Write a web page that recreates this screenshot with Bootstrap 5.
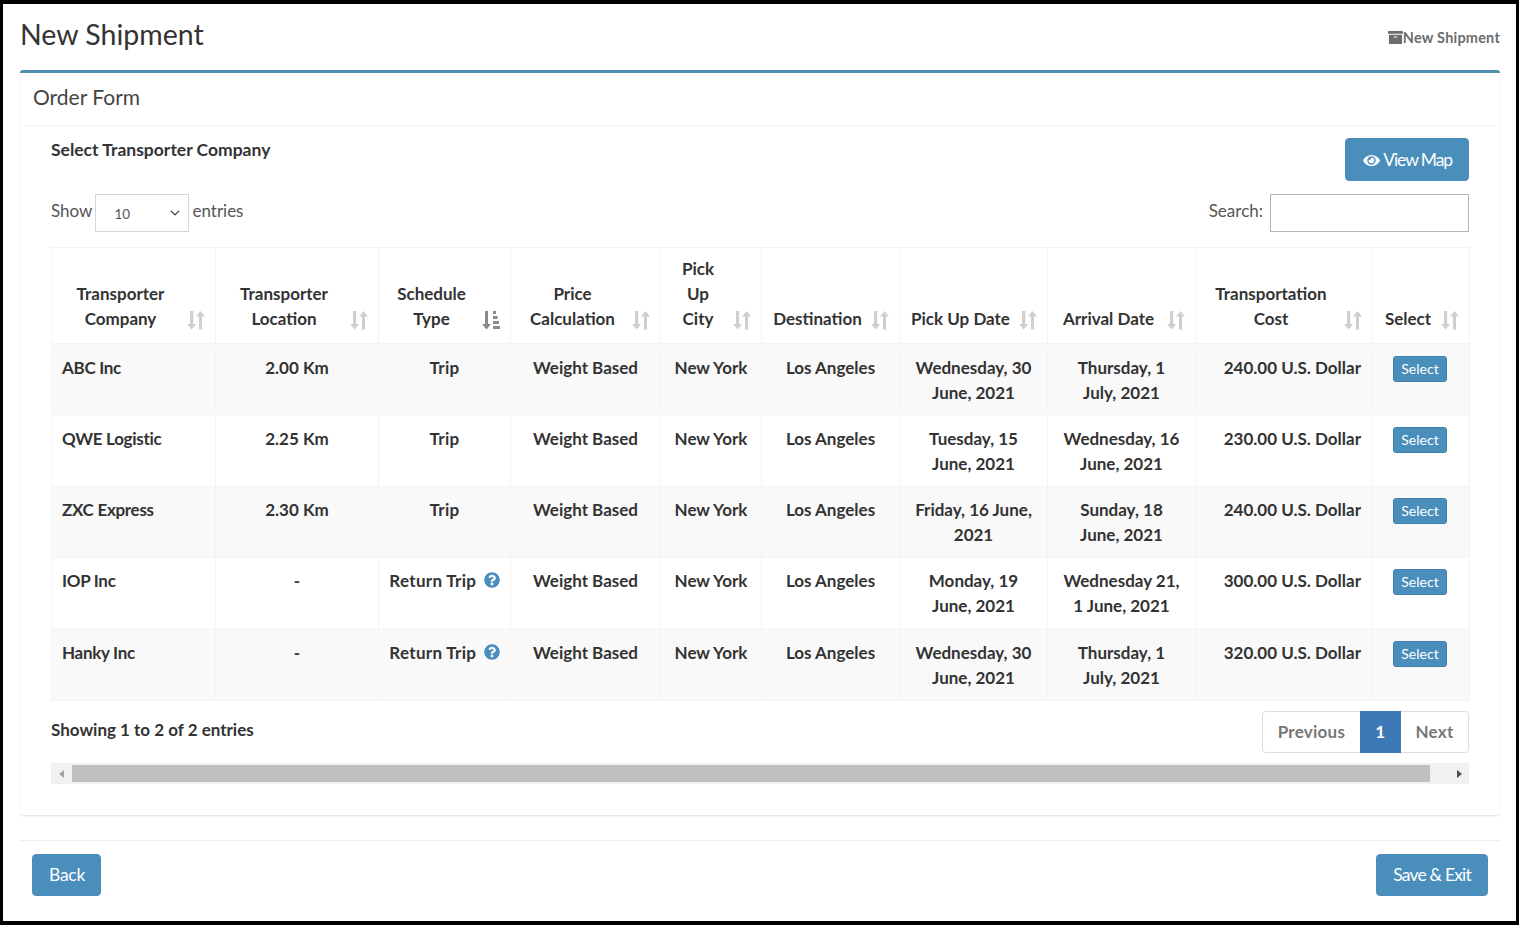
<!DOCTYPE html>
<html lang="en">
<head>
<meta charset="utf-8">
<title>New Shipment</title>
<link href="https://cdn.jsdelivr.net/npm/bootstrap@5.3.0/dist/css/bootstrap.min.css" rel="stylesheet">
<style>
html,body{height:100%}
body{font-family:"Lato","Liberation Sans",sans-serif;font-size:17px;line-height:25px;color:#333;background:#fff;border:solid #000;border-width:4px 3px;overflow:hidden}
.page-wrap{padding:0 16px 0 17px}
.title-bar{height:66px;padding-top:10px}
.title-bar h1{font-size:28.500px;line-height:40px;margin:0;font-weight:400;color:#333}
.crumb{font-size:14.500px;font-weight:700;color:#6c6c6c;margin-top:12px;line-height:24px;letter-spacing:.2px}
.crumb svg{width:15px;height:15px;vertical-align:-2px;fill:#6c6c6c}
.order-card{--bs-card-border-radius:3px;--bs-card-inner-border-radius:0;border:0;border-top:3px solid #4f8fb3;box-shadow:0 1px 2px rgba(0,0,0,.12);height:745px}
.order-card .card-header{background:#fff;border-bottom:1px solid #f4f4f4;height:53px;padding:10px 13px;font-size:21px;line-height:27px;color:#444}
.order-card .card-body{padding:12px 31px 0}
.sub-title{font-weight:700;font-size:17.500px;line-height:24px}
.btn-ship{--bs-btn-bg:#4a8ebc;--bs-btn-border-color:#4a8ebc;--bs-btn-color:#fff;--bs-btn-hover-bg:#3f7fab;--bs-btn-hover-color:#fff;--bs-btn-border-radius:4px;font-size:17.500px;line-height:25px;padding:8px 16px;letter-spacing:-.8px}
.btn-ship svg{width:19px;height:15px;fill:#fff;vertical-align:-2px;margin-right:2px}
.btn-map{letter-spacing:-1.100px}
.btn-foot{line-height:24px}
.btn-back{letter-spacing:-.25px;padding-right:15px}
.filters{margin-top:13px;height:38px;color:#555;line-height:34px}
.entries-pick{width:94px;height:38px;border-radius:0;border:1px solid #d2d6de;font-size:13.500px;padding:2px 12px 0 18px;margin:0 3px;color:#555;background-position:right 6px center;background-size:14px 10px}
.search-box{width:199px;height:38px;border-radius:0;border:1px solid #b5b5b5;margin-left:7px}
.ship-tbl{--bs-table-striped-bg:#f9f9f9;--bs-table-border-color:#f4f4f4;--bs-table-color:#333;--bs-table-striped-color:#333;table-layout:fixed;width:1418px;margin:15px 0 0;border-color:#f4f4f4;font-weight:700;line-height:25px}
.ship-tbl th{position:relative;vertical-align:bottom;text-align:center;padding:8px 37px 12px 11px;border-bottom:2px solid #f4f4f4;font-weight:700;white-space:normal}
.ship-tbl th:nth-child(1){width:164px}
.ship-tbl th:nth-child(2){width:163px}
.ship-tbl th:nth-child(3){width:132px}
.ship-tbl th:nth-child(4){width:150px}
.ship-tbl th:nth-child(5){width:101px}
.ship-tbl th:nth-child(6){width:138px}
.ship-tbl th:nth-child(7){width:148px}
.ship-tbl th:nth-child(8){width:148px}
.ship-tbl th:nth-child(9){width:177px}
.ship-tbl th:nth-child(10){width:97px}
.ship-tbl td{padding:10px 11px;text-align:center;height:71px;vertical-align:top}
.ship-tbl tbody tr:last-child td{padding-top:11px}
.ship-tbl td:first-child{text-align:left;padding-left:10px;letter-spacing:-.3px}
.ship-tbl td:nth-child(3){letter-spacing:.3px;padding-left:10px;padding-right:10px}
.ship-tbl td:nth-child(9){text-align:right}
.ship-tbl td:nth-child(10){padding-right:13px}
.sort-mark{position:absolute;right:10px;bottom:13px;width:18px;height:20px}
.help-mark{width:16px;height:16px;fill:#4a8ebc;margin-left:3px;vertical-align:-1px}
.pick-btn{--bs-btn-bg:#4a8ebc;--bs-btn-border-color:#3f7fab;--bs-btn-color:#fff;font-size:14px;line-height:18px;padding:3px 7px;border-radius:3px;font-weight:400;margin-top:-1px}
.foot-row{margin-top:10px;height:42px}
.foot-info{font-weight:700;line-height:38px}
.ship-pages{--bs-pagination-color:#777;--bs-pagination-active-bg:#3d78b7;--bs-pagination-active-border-color:#3d78b7;--bs-pagination-border-color:#ddd;--bs-pagination-padding-x:14.550px;--bs-pagination-padding-y:8px;--bs-pagination-font-size:17px;--bs-pagination-border-radius:4px;font-weight:700;margin:0;line-height:24px;letter-spacing:.25px}
.fake-scroll{position:relative;height:21px;margin-top:10px;background:#f1f1f1;padding:2px 39px 2px 21px}
.fake-scroll .thumb{height:100%;background:#c1c1c1}
.arrow-l,.arrow-r{position:absolute;top:6.500px;width:0;height:0;border-style:solid;border-width:4px 0 4px 5px;border-color:transparent transparent transparent #505050}
.arrow-l{left:8px;border-width:4px 5px 4px 0;border-color:transparent #a3a3a3 transparent transparent}
.arrow-r{right:7px}
.rule-line{margin:25px 0 13px;border:0;border-top:1px solid #eee;opacity:1}
.foot-btns{padding:0 12px}
</style>
</head>
<body>
<div class="page-wrap">
  <div class="title-bar d-flex justify-content-between align-items-start">
    <h1>New Shipment</h1>
    <div class="crumb"><svg viewBox="0 0 512 512"><path d="M32 448c0 17.700 14.300 32 32 32h384c17.700 0 32-14.300 32-32V160H32v288zm160-212c0-6.600 5.400-12 12-12h104c6.600 0 12 5.400 12 12v8c0 6.600-5.400 12-12 12H204c-6.600 0-12-5.400-12-12v-8zM480 32H32C14.300 32 0 46.300 0 64v48c0 8.800 7.200 16 16 16h480c8.800 0 16-7.200 16-16V64c0-17.700-14.300-32-32-32z"/></svg>New Shipment</div>
  </div>
  <div class="card order-card">
    <div class="card-header">Order Form</div>
    <div class="card-body">
      <div class="d-flex justify-content-between align-items-start">
        <div class="sub-title">Select Transporter Company</div>
        <button class="btn btn-ship btn-map" type="button"><svg viewBox="0 0 576 512"><path d="M572.520 241.400C518.290 135.590 410.930 64 288 64S57.680 135.640 3.480 241.410a32.350 32.350 0 0 0 0 29.190C57.710 376.410 165.070 448 288 448s230.320-71.640 284.520-177.410a32.350 32.350 0 0 0 0-29.190zM288 400a144 144 0 1 1 144-144 143.930 143.930 0 0 1-144 144zm0-240a95.310 95.310 0 0 0-25.310 3.790 47.850 47.850 0 0 1-66.900 66.900A95.780 95.780 0 1 0 288 160z"/></svg>View Map</button>
      </div>
      <div class="filters d-flex justify-content-between">
        <div class="d-flex"><span>Show</span><select class="form-select entries-pick"><option>10</option><option>25</option></select><span>entries</span></div>
        <div class="d-flex"><span>Search:</span><input class="form-control search-box" type="search" aria-label="Search"></div>
      </div>
      <table class="table table-bordered table-striped ship-tbl">
        <thead>
          <tr>
            <th>Transporter Company<svg class="sort-mark" viewBox="0 0 18 20"><use href="#sort-both"/></svg></th>
            <th>Transporter Location<svg class="sort-mark" viewBox="0 0 18 20"><use href="#sort-both"/></svg></th>
            <th>Schedule Type<svg class="sort-mark" viewBox="0 0 18 20"><path fill="#8a8a8a" d="M3 1h3v13h3l-4.500 5.500L0 14h3zM11 1h3v3h-3zM11 6h4.500v3H11zM11 11h6v3h-6zM11 16h7v3h-7z"/></svg></th>
            <th>Price Calculation<svg class="sort-mark" viewBox="0 0 18 20"><use href="#sort-both"/></svg></th>
            <th>Pick Up City<svg class="sort-mark" viewBox="0 0 18 20"><use href="#sort-both"/></svg></th>
            <th>Destination<svg class="sort-mark" viewBox="0 0 18 20"><use href="#sort-both"/></svg></th>
            <th>Pick Up Date<svg class="sort-mark" viewBox="0 0 18 20"><use href="#sort-both"/></svg></th>
            <th>Arrival Date<svg class="sort-mark" viewBox="0 0 18 20"><use href="#sort-both"/></svg></th>
            <th>Transportation Cost<svg class="sort-mark" viewBox="0 0 18 20"><use href="#sort-both"/></svg></th>
            <th>Select<svg class="sort-mark" viewBox="0 0 18 20"><use href="#sort-both"/></svg></th>
          </tr>
        </thead>
        <tbody>
          <tr><td>ABC Inc</td><td>2.00 Km</td><td>Trip</td><td>Weight Based</td><td>New York</td><td>Los Angeles</td><td>Wednesday, 30 June, 2021</td><td>Thursday, 1 July,&nbsp;2021</td><td>240.00 U.S. Dollar</td><td><button class="btn pick-btn" type="button">Select</button></td></tr>
          <tr><td>QWE Logistic</td><td>2.25 Km</td><td>Trip</td><td>Weight Based</td><td>New York</td><td>Los Angeles</td><td>Tuesday, 15 June, 2021</td><td>Wednesday, 16 June, 2021</td><td>230.00 U.S. Dollar</td><td><button class="btn pick-btn" type="button">Select</button></td></tr>
          <tr><td>ZXC Express</td><td>2.30 Km</td><td>Trip</td><td>Weight Based</td><td>New York</td><td>Los Angeles</td><td>Friday, 16 June, 2021</td><td>Sunday, 18 June, 2021</td><td>240.00 U.S. Dollar</td><td><button class="btn pick-btn" type="button">Select</button></td></tr>
          <tr><td>IOP Inc</td><td>-</td><td>Return Trip <svg class="help-mark" viewBox="0 0 512 512"><use href="#help-q"/></svg></td><td>Weight Based</td><td>New York</td><td>Los Angeles</td><td>Monday, 19 June, 2021</td><td>Wednesday 21, 1 June, 2021</td><td>300.00 U.S. Dollar</td><td><button class="btn pick-btn" type="button">Select</button></td></tr>
          <tr><td>Hanky Inc</td><td>-</td><td>Return Trip <svg class="help-mark" viewBox="0 0 512 512"><use href="#help-q"/></svg></td><td>Weight Based</td><td>New York</td><td>Los Angeles</td><td>Wednesday, 30 June, 2021</td><td>Thursday, 1 July,&nbsp;2021</td><td>320.00 U.S. Dollar</td><td><button class="btn pick-btn" type="button">Select</button></td></tr>
        </tbody>
      </table>
      <div class="foot-row d-flex justify-content-between align-items-start">
        <div class="foot-info">Showing 1 to 2 of 2 entries</div>
        <ul class="pagination ship-pages">
          <li class="page-item"><a class="page-link" href="#">Previous</a></li>
          <li class="page-item active"><a class="page-link" href="#">1</a></li>
          <li class="page-item"><a class="page-link" href="#">Next</a></li>
        </ul>
      </div>
      <div class="fake-scroll"><span class="arrow-l"></span><div class="thumb"></div><span class="arrow-r"></span></div>
    </div>
  </div>
  <hr class="rule-line">
  <div class="foot-btns d-flex justify-content-between">
    <button class="btn btn-ship btn-foot btn-back" type="button">Back</button>
    <button class="btn btn-ship btn-foot" type="button">Save &amp; Exit</button>
  </div>
</div>
<svg class="d-none" xmlns="http://www.w3.org/2000/svg">
  <symbol id="sort-both" viewBox="0 0 18 20"><path fill="#cfcfcf" d="M3 1h3.200v13h3L4.600 19.500 0 14h3zM12 19.500V6.500H9L13.600 1l4.400 5.500h-3v13z"/></symbol>
  <symbol id="help-q" viewBox="0 0 512 512"><path d="M504 256c0 136.997-111.043 248-248 248S8 392.997 8 256C8 119.083 119.043 8 256 8s248 111.083 248 248zM262.655 90c-54.497 0-89.255 22.957-116.549 63.758-3.536 5.286-2.353 12.415 2.715 16.258l34.699 26.310c5.205 3.947 12.621 3.008 16.665-2.122 17.864-22.658 30.113-35.797 57.303-35.797 20.429 0 45.698 13.148 45.698 32.958 0 14.976-12.363 22.667-32.534 33.976C247.128 238.528 216 254.941 216 296v4c0 6.627 5.373 12 12 12h56c6.627 0 12-5.373 12-12v-1.333c0-28.462 83.186-29.647 83.186-106.667 0-58.002-60.165-102-116.531-102zM256 338c-25.365 0-46 20.635-46 46 0 25.364 20.635 46 46 46s46-20.636 46-46c0-25.365-20.635-46-46-46z"/></symbol>
</svg>
<script src="https://cdn.jsdelivr.net/npm/bootstrap@5.3.0/dist/js/bootstrap.bundle.min.js"></script>
</body>
</html>
